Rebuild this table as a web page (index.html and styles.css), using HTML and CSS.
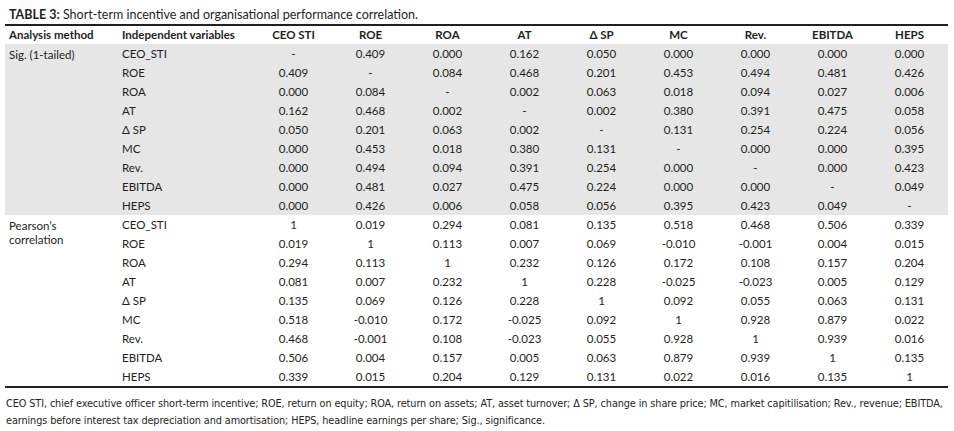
FILE: index.html
```html
<!DOCTYPE html>
<html lang="en">
<head>
<meta charset="utf-8">
<title>Table 3</title>
<link rel="stylesheet" href="styles.css">
</head>
<body>
<div class="page">
  <p class="caption"><b>TABLE 3:</b> Short-term incentive and organisational performance correlation.</p>
  <table class="data">
    <colgroup>
      <col class="c-method"><col class="c-var">
      <col class="c-num"><col class="c-num"><col class="c-num"><col class="c-num"><col class="c-num"><col class="c-num"><col class="c-num"><col class="c-num"><col class="c-num">
    </colgroup>
    <thead>
      <tr>
        <th class="left">Analysis method</th>
        <th class="left">Independent variables</th>
        <th>CEO STI</th><th>ROE</th><th>ROA</th><th>AT</th><th>Δ SP</th><th>MC</th><th>Rev.</th><th>EBITDA</th><th>HEPS</th>
      </tr>
    </thead>
    <tbody class="shaded">
      <tr><td class="left method" rowspan="9">Sig. (1-tailed)</td><td class="left">CEO_STI</td><td>-</td><td>0.409</td><td>0.000</td><td>0.162</td><td>0.050</td><td>0.000</td><td>0.000</td><td>0.000</td><td>0.000</td></tr>
      <tr><td class="left">ROE</td><td>0.409</td><td>-</td><td>0.084</td><td>0.468</td><td>0.201</td><td>0.453</td><td>0.494</td><td>0.481</td><td>0.426</td></tr>
      <tr><td class="left">ROA</td><td>0.000</td><td>0.084</td><td>-</td><td>0.002</td><td>0.063</td><td>0.018</td><td>0.094</td><td>0.027</td><td>0.006</td></tr>
      <tr><td class="left">AT</td><td>0.162</td><td>0.468</td><td>0.002</td><td>-</td><td>0.002</td><td>0.380</td><td>0.391</td><td>0.475</td><td>0.058</td></tr>
      <tr><td class="left">Δ SP</td><td>0.050</td><td>0.201</td><td>0.063</td><td>0.002</td><td>-</td><td>0.131</td><td>0.254</td><td>0.224</td><td>0.056</td></tr>
      <tr><td class="left">MC</td><td>0.000</td><td>0.453</td><td>0.018</td><td>0.380</td><td>0.131</td><td>-</td><td>0.000</td><td>0.000</td><td>0.395</td></tr>
      <tr><td class="left">Rev.</td><td>0.000</td><td>0.494</td><td>0.094</td><td>0.391</td><td>0.254</td><td>0.000</td><td>-</td><td>0.000</td><td>0.423</td></tr>
      <tr><td class="left">EBITDA</td><td>0.000</td><td>0.481</td><td>0.027</td><td>0.475</td><td>0.224</td><td>0.000</td><td>0.000</td><td>-</td><td>0.049</td></tr>
      <tr><td class="left">HEPS</td><td>0.000</td><td>0.426</td><td>0.006</td><td>0.058</td><td>0.056</td><td>0.395</td><td>0.423</td><td>0.049</td><td>-</td></tr>
    </tbody>
    <tbody class="plain">
      <tr><td class="left method" rowspan="9">Pearson’s correlation</td><td class="left">CEO_STI</td><td>1</td><td>0.019</td><td>0.294</td><td>0.081</td><td>0.135</td><td>0.518</td><td>0.468</td><td>0.506</td><td>0.339</td></tr>
      <tr><td class="left">ROE</td><td>0.019</td><td>1</td><td>0.113</td><td>0.007</td><td>0.069</td><td>-0.010</td><td>-0.001</td><td>0.004</td><td>0.015</td></tr>
      <tr><td class="left">ROA</td><td>0.294</td><td>0.113</td><td>1</td><td>0.232</td><td>0.126</td><td>0.172</td><td>0.108</td><td>0.157</td><td>0.204</td></tr>
      <tr><td class="left">AT</td><td>0.081</td><td>0.007</td><td>0.232</td><td>1</td><td>0.228</td><td>-0.025</td><td>-0.023</td><td>0.005</td><td>0.129</td></tr>
      <tr><td class="left">Δ SP</td><td>0.135</td><td>0.069</td><td>0.126</td><td>0.228</td><td>1</td><td>0.092</td><td>0.055</td><td>0.063</td><td>0.131</td></tr>
      <tr><td class="left">MC</td><td>0.518</td><td>-0.010</td><td>0.172</td><td>-0.025</td><td>0.092</td><td>1</td><td>0.928</td><td>0.879</td><td>0.022</td></tr>
      <tr><td class="left">Rev.</td><td>0.468</td><td>-0.001</td><td>0.108</td><td>-0.023</td><td>0.055</td><td>0.928</td><td>1</td><td>0.939</td><td>0.016</td></tr>
      <tr><td class="left">EBITDA</td><td>0.506</td><td>0.004</td><td>0.157</td><td>0.005</td><td>0.063</td><td>0.879</td><td>0.939</td><td>1</td><td>0.135</td></tr>
      <tr><td class="left">HEPS</td><td>0.339</td><td>0.015</td><td>0.204</td><td>0.129</td><td>0.131</td><td>0.022</td><td>0.016</td><td>0.135</td><td>1</td></tr>
    </tbody>
  </table>
  <p class="note">CEO STI, chief executive officer short-term incentive; ROE, return on equity; ROA, return on assets; AT, asset turnover; Δ SP, change in share price; MC, market capitilisation; Rev., revenue; EBITDA,<br>earnings before interest tax depreciation and amortisation; HEPS, headline earnings per share; Sig., significance.</p>
</div>
</body>
</html>
```
FILE: styles.css
```css
html, body {
  margin: 0;
  padding: 0;
  background: #ffffff;
}
body {
  font-family: Lato, "Open Sans", sans-serif;
  color: #231f20;
}
.page {
  padding: 6px 6px 0 5px;
}
.caption {
  margin: 0 0 0 4px;
  font-size: 12.5px;
  line-height: 17px;
}
.data {
  border-collapse: collapse;
  table-layout: fixed;
  width: 943px;
  margin-top: 1px;
  font-size: 11.5px;
  border-top: 2px solid #231f20;
  border-bottom: 2px solid #231f20;
}
.c-method { width: 113px; }
.c-var { width: 137px; }
.c-num { width: 77px; }
.data th, .data td {
  padding: 0;
  height: 19px;
  line-height: 19px;
  text-align: center;
  white-space: nowrap;
}
.data th {
  height: 18px;
  line-height: 18px;
  font-weight: bold;
}
.data .left {
  text-align: left;
  padding-left: 4px;
}
.data td.method {
  vertical-align: top;
  white-space: normal;
  line-height: 14px;
  padding-top: 4px;
  padding-right: 40px;
}
.shaded td {
  background: #e6e6e7;
}
.note {
  margin: 7px 0 0 1px;
  font-family: "DejaVu Sans Condensed", "DejaVu Sans", sans-serif;
  font-size: 10.8px;
  line-height: 17px;
  letter-spacing: -0.1px;
  white-space: nowrap;
}
```
